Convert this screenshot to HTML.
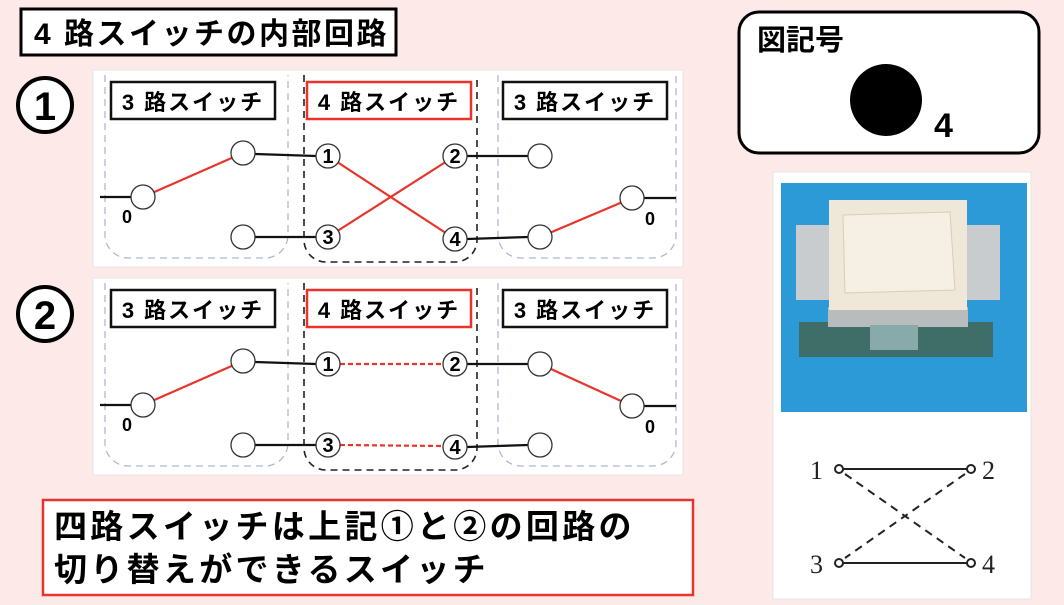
<!DOCTYPE html>
<html><head><meta charset="utf-8"><style>
html,body{margin:0;padding:0;background:#fde9e8;}
svg{display:block}
text{font-family:"Liberation Sans","Noto Sans CJK JP",sans-serif;}
</style></head><body>
<svg width="1064" height="605" viewBox="0 0 1064 605" xmlns="http://www.w3.org/2000/svg">
<rect width="1064" height="605" fill="#fde9e8"/>
<rect x="21" y="9" width="375" height="46" fill="#fff" stroke="#000" stroke-width="3"/>
<text x="34" y="44" font-size="30" font-weight="bold" letter-spacing="2.5">4 路スイッチの内部回路</text>
<circle cx="45" cy="105" r="27" fill="#fff" stroke="#000" stroke-width="4"/>
<text x="45" y="120" font-size="40" font-weight="bold" text-anchor="middle">1</text>
<circle cx="45" cy="314" r="27" fill="#fff" stroke="#000" stroke-width="4"/>
<text x="45" y="329" font-size="40" font-weight="bold" text-anchor="middle">2</text>

<defs>
<g id="panel">
<rect x="93" y="70" width="590" height="197" fill="#fff" stroke="#e6e6e6"/>
<path d="M105 75 V235 a23 23 0 0 0 23 23 H265 a23 23 0 0 0 23 -23 V75" fill="none" stroke="#aeb9d0" stroke-width="1.3" stroke-dasharray="7,5"/>
<path d="M498 75 V235 a23 23 0 0 0 23 23 H653 a23 23 0 0 0 23 -23 V75" fill="none" stroke="#aeb9d0" stroke-width="1.3" stroke-dasharray="7,5"/>
<path d="M304 75 V240 a22 22 0 0 0 22 22 H455 a22 22 0 0 0 22 -22 V75" fill="none" stroke="#222" stroke-width="1.6" stroke-dasharray="7,5"/>
<rect x="111" y="82" width="164" height="37" fill="#fff" stroke="#111" stroke-width="2.5"/>
<text x="193" y="110" font-size="22" font-weight="bold" text-anchor="middle" letter-spacing="2">3 路スイッチ</text>
<rect x="307" y="82" width="164" height="37" fill="#fff" stroke="#e8342a" stroke-width="2.5"/>
<text x="389" y="110" font-size="22" font-weight="bold" text-anchor="middle" letter-spacing="2">4 路スイッチ</text>
<rect x="503" y="82" width="164" height="37" fill="#fff" stroke="#111" stroke-width="2.5"/>
<text x="585" y="110" font-size="22" font-weight="bold" text-anchor="middle" letter-spacing="2">3 路スイッチ</text>
<g stroke="#111" stroke-width="2.2">
<line x1="100" y1="197" x2="131" y2="197"/>
<line x1="255" y1="154" x2="316" y2="156"/>
<line x1="255" y1="237" x2="316" y2="237"/>
<line x1="467" y1="156" x2="528" y2="156"/>
<line x1="467" y1="239" x2="528" y2="237"/>
<line x1="644" y1="198" x2="676" y2="198"/>
</g>
<text x="127" y="223" font-size="18" font-weight="bold" text-anchor="middle">0</text>
<text x="650" y="225" font-size="18" font-weight="bold" text-anchor="middle">0</text>
</g>
<g id="nodes">
<g fill="#fff" stroke="#333" stroke-width="1.3">
<circle cx="143" cy="197" r="12"/><circle cx="243" cy="153" r="12"/><circle cx="243" cy="237" r="12"/>
<circle cx="540" cy="156" r="12"/><circle cx="540" cy="237" r="12"/><circle cx="632" cy="198" r="12"/>
<circle cx="328" cy="156" r="12"/><circle cx="328" cy="237" r="12"/><circle cx="455" cy="156" r="12"/><circle cx="455" cy="239" r="12"/>
</g>
<g font-size="20" font-weight="bold" text-anchor="middle">
<text x="328" y="163">1</text><text x="328" y="244">3</text><text x="455" y="163">2</text><text x="455" y="246">4</text>
</g>
</g>
</defs>

<use href="#panel"/>
<g stroke="#e8342a" stroke-width="2.2">
<line x1="143" y1="197" x2="243" y2="153"/>
<line x1="328" y1="156" x2="455" y2="239"/>
<line x1="328" y1="237" x2="455" y2="156"/>
<line x1="540" y1="237" x2="632" y2="198"/>
</g>
<use href="#nodes"/>

<g transform="translate(0,208)">
<use href="#panel"/>
<g stroke="#e8342a" stroke-width="2.2">
<line x1="143" y1="197" x2="243" y2="153"/>
<line x1="340" y1="156" x2="443" y2="156" stroke-dasharray="5,3"/>
<line x1="340" y1="237" x2="443" y2="238" stroke-dasharray="5,3"/>
<line x1="540" y1="156" x2="632" y2="198"/>
</g>
<use href="#nodes"/>
</g>

<rect x="43" y="500" width="650" height="95" fill="#fff" stroke="#e8342a" stroke-width="2.5"/>
<text x="54" y="538" font-size="33" font-weight="bold" letter-spacing="3.3">四路スイッチは上記①と②の回路の</text>
<text x="54" y="581" font-size="33" font-weight="bold" letter-spacing="3.3">切り替えができるスイッチ</text>

<rect x="739" y="12" width="300" height="141" rx="20" fill="#fff" stroke="#000" stroke-width="3"/>
<text x="757" y="50" font-size="29" font-weight="bold">図記号</text>
<circle cx="886" cy="100" r="36" fill="#000"/>
<text x="934" y="137" font-size="34" font-weight="bold">4</text>

<rect x="773" y="172" width="258" height="427" fill="#fff" stroke="#e5e5e5"/>
<rect x="781" y="183" width="246" height="229" fill="#2b9ad6"/>
<rect x="796" y="225" width="36" height="75" fill="#c9ccce"/>
<rect x="966" y="225" width="34" height="75" fill="#c9ccce"/>
<rect x="799" y="322" width="194" height="35" fill="#3f6d68"/>
<rect x="828" y="307" width="140" height="20" fill="#b9bcbd"/>
<rect x="829" y="200" width="138" height="110" fill="#efe7d8"/>
<path d="M843 215 L950 212 L955 290 L845 293 Z" fill="#f6f0e4" stroke="#d8cdb5"/>
<rect x="870" y="325" width="48" height="25" fill="#8aa"/>
<g stroke="#222" stroke-width="2" fill="none">
<circle cx="839" cy="469" r="4"/><circle cx="971" cy="469" r="4"/>
<circle cx="839" cy="563" r="4"/><circle cx="971" cy="563" r="4"/>
<line x1="843" y1="469" x2="967" y2="469"/><line x1="843" y1="563" x2="967" y2="563"/>
<line x1="845" y1="474" x2="965" y2="558" stroke-dasharray="8,6"/>
<line x1="965" y1="474" x2="845" y2="558" stroke-dasharray="8,6"/>
</g>
<g font-size="26" fill="#222">
<text x="810" y="479" style="font-family:'Liberation Serif',serif">1</text>
<text x="982" y="479" style="font-family:'Liberation Serif',serif">2</text>
<text x="810" y="573" style="font-family:'Liberation Serif',serif">3</text>
<text x="982" y="573" style="font-family:'Liberation Serif',serif">4</text>
</g>
</svg>
</body></html>
